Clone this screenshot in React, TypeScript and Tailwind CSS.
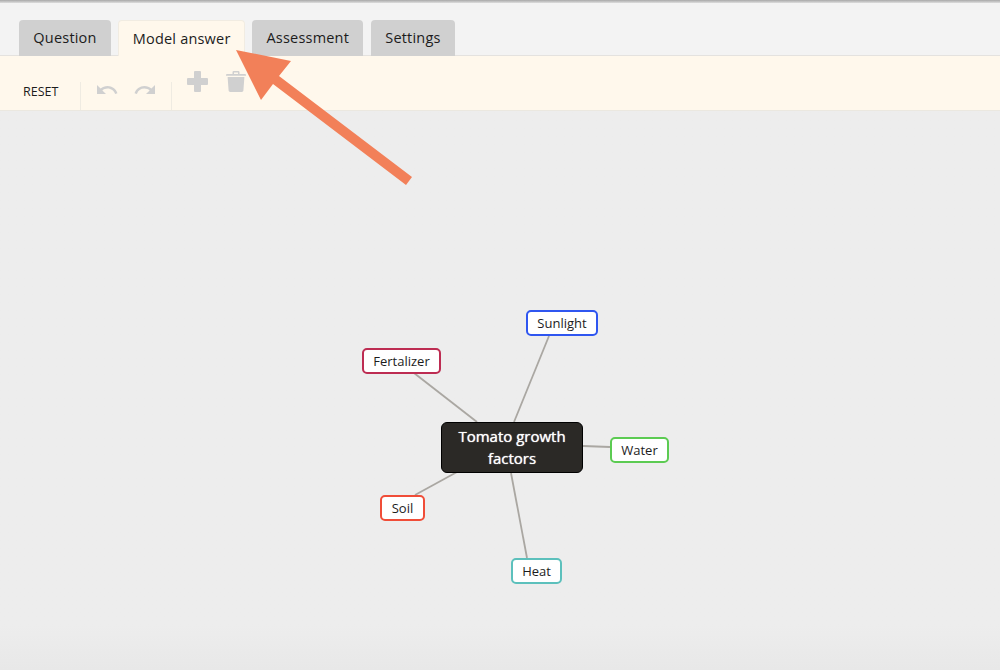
import { MdUndo, MdRedo } from 'react-icons/md';

// ── TABS ───────────────────────────────────────────────
const tabs = [
  { label: 'Question', width: 'w-[92px]' },
  { label: 'Model answer', width: 'w-[126.7px]', active: true },
  { label: 'Assessment', width: 'w-[111px]' },
  { label: 'Settings', width: 'w-[84.7px]' },
];

function TabBar() {
  return (
    <div className="flex h-[53px] items-end gap-[7.3px] border-b border-[#e4e2df] bg-[#f3f3f3] pl-[19px]">
      {tabs.map(tab => (
        <div
          key={tab.label}
          className={`-mb-px flex h-[36px] items-center justify-center rounded-t-[4px] text-[14.5px] font-medium tracking-[0.2px] text-[#1c1c1c] ${tab.width} ${tab.active ? 'z-10 border border-b-0 border-[#f1ece2] bg-[#fff8ec]' : 'bg-[#d0d0d0]'}`}
        >
          {tab.label}
        </div>
      ))}
    </div>
  );
}

// ── TOOLBAR ────────────────────────────────────────────
function PlusIcon() {
  return (
    <svg width="21" height="21" viewBox="0 0 21 21" fill="currentColor">
      <path d="M8 0h5a1 1 0 0 1 1 1v6h6a1 1 0 0 1 1 1v5a1 1 0 0 1-1 1h-6v6a1 1 0 0 1-1 1H8a1 1 0 0 1-1-1v-6H1a1 1 0 0 1-1-1V8a1 1 0 0 1 1-1h6V1a1 1 0 0 1 1-1z" />
    </svg>
  );
}

function TrashIcon() {
  return (
    <svg width="20" height="21" viewBox="0 0 20 21" fill="currentColor">
      <path d="M6.5 3V1.2A1.2 1.2 0 0 1 7.7 0h4.6a1.2 1.2 0 0 1 1.2 1.2V3H19a1 1 0 0 1 1 1v.8H0V4a1 1 0 0 1 1-1zM8 3h4V1.4H8z" fillRule="evenodd" />
      <path d="M1.6 6h16.8l-1 13.6A1.5 1.5 0 0 1 15.9 21H4.1a1.5 1.5 0 0 1-1.5-1.4z" />
    </svg>
  );
}

function Toolbar() {
  return (
    <div className="flex h-[55px] items-end border-b border-[#ebe8e0] bg-[#fff8ec]">
      <div className="flex h-[28px] w-[81px] items-start border-r border-[#efebe2] pl-[23px] pt-[1px] text-[12.5px] leading-[18px] text-[#1c1c1c]">
        RESET
      </div>
      <div className="flex h-[28px] w-[91px] items-start gap-[14px] border-r border-[#efebe2] pl-[14px] text-[#d0d0d0]">
        <MdUndo size={24} className="-mt-[4px]" />
        <MdRedo size={24} className="-mt-[4px]" />
      </div>
      <div className="flex h-full items-start gap-[18px] pl-[15px] pt-[15px] text-[#d0d0d0]">
        <PlusIcon />
        <TrashIcon />
      </div>
    </div>
  );
}

// ── MIND MAP ───────────────────────────────────────────
const links = [
  [549, 225, 514, 311],
  [414, 262, 477, 311],
  [583, 335, 610, 336],
  [415, 384, 457, 361],
  [527, 447, 511, 362],
];

const nodes = [
  { label: 'Sunlight', className: 'left-[526px] top-[199px] w-[72px] border-[#2f56f0]' },
  { label: 'Fertalizer', className: 'left-[362px] top-[237px] w-[79px] border-[#bd2c52]' },
  { label: 'Water', className: 'left-[610px] top-[326px] w-[59px] border-[#5ccb52]' },
  { label: 'Soil', className: 'left-[380px] top-[384px] w-[45px] border-[#f04d38]' },
  { label: 'Heat', className: 'left-[511px] top-[447px] w-[51px] border-[#5cc0bc]' },
];

function MindMap() {
  return (
    <div className="relative flex-1 bg-gradient-to-b from-[#ededed] from-[92%] to-[#e8e8e8]">
      <svg className="absolute inset-0 h-full w-full">
        {links.map(([x1, y1, x2, y2]) => (
          <line key={x1} x1={x1} y1={y1} x2={x2} y2={y2} stroke="#aaa7a2" strokeWidth="1.8" />
        ))}
      </svg>
      {nodes.map(node => (
        <div
          key={node.label}
          className={`absolute flex h-[26px] items-center justify-center rounded-[5px] border-2 bg-white pt-[1px] text-[13px] text-[#1c1c1c] ${node.className}`}
        >
          {node.label}
        </div>
      ))}
      <div className="absolute left-[441px] top-[311px] flex h-[51px] w-[142px] items-center justify-center rounded-[6px] border border-black bg-[#2b2926] pb-[2px] text-center text-[15px] font-medium leading-[22px] text-white [text-shadow:0_0_1px_#fff]">
        Tomato growth
        <br />
        factors
      </div>
    </div>
  );
}

export default function App() {
  return (
    <div className="relative flex h-[670px] w-[1000px] flex-col overflow-hidden font-['Open_Sans',sans-serif]">
      <div className="h-[3px] bg-gradient-to-b from-[#a8a8a8] to-[#dedede]" />
      <TabBar />
      <Toolbar />
      <MindMap />
      {/* annotation arrow lies over the tabs and toolbar */}
      <svg className="absolute left-0 top-0 z-20 h-[200px] w-[450px]">
        <polygon points="236,50 291,61 279,76 412,177 406,185 273,84 261,100" fill="#f28059" />
      </svg>
    </div>
  );
}
